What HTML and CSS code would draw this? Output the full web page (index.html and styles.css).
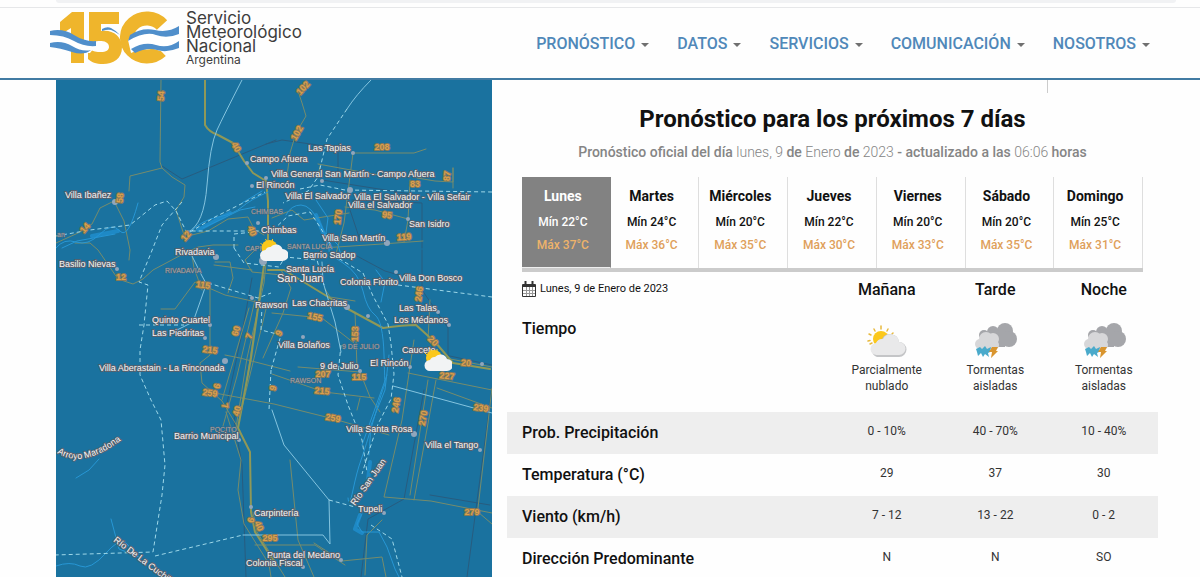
FILE: index.html
```html
<!DOCTYPE html>
<html lang="es">
<head>
<meta charset="utf-8">
<meta name="viewport" content="width=device-width, initial-scale=1">
<title>Servicio Meteorológico Nacional</title>
<link rel="stylesheet" href="styles.css">
</head>
<body>
<svg width="0" height="0" class="defs" aria-hidden="true">
  <symbol id="partly" viewBox="0 0 44 38">
    <g stroke="#e8b93c" stroke-width="1.500" stroke-linecap="round">
      <path d="M3 20l2-.5M4 13l2 1M9 8l1 2M16 5v3M23 8l-1 2M28 12l-1 1M5 23l2-1"/>
    </g>
    <circle cx="16" cy="18" r="8" fill="#fbc81c"/>
    <path d="M12 36a7 7 0 0 1-1-13 7 7 0 0 1 6-5 9 9 0 0 1 17 3 7.500 7.500 0 0 1 0 15z" fill="#c4c5c7"/>
    <path d="M12 34a6 6 0 0 1-1-12 7 7 0 0 1 7-4 8.500 8.500 0 0 1 16 3 6.500 6.500 0 0 1 0 13z" fill="#e9e9ea"/>
  </symbol>
  <symbol id="storm" viewBox="0 0 44 38">
    <g fill="#a5a6aa"><circle cx="32" cy="10" r="8"/><circle cx="36" cy="18" r="8"/><circle cx="20" cy="11" r="6"/><circle cx="11" cy="14" r="5"/><path d="M10 11h22v15H14z"/></g>
    <g fill="#d7d7d9"><circle cx="13" cy="18" r="7"/><circle cx="20" cy="18" r="6"/><circle cx="7" cy="23" r="5"/><circle cx="22" cy="24" r="4"/><path d="M7 18h15v10H7z"/></g>
    <path d="M3 28l4-2 2 2 3-3 2 3 4-2-1 5-2 1 1 4-4-3-2 3-2-4-3 3-1-4z" fill="#4aaacb"/>
    <path d="M19 26h6l-2 4h2l-7 7 1-6h-3z" fill="#d9952f"/>
  </symbol>
  <symbol id="mappartly" viewBox="0 0 28 23">
    <circle cx="10" cy="9" r="8" fill="#fbc81c"/>
    <path d="M1 4l2 2M6 0l1 2M13 0v2" stroke="#fbc81c"/>
    <path d="M6 22a5 5 0 0 1 0-11 5 5 0 0 1 5-3 7 7 0 0 1 12 2 6 6 0 0 1 0 12z" fill="#f2f3f4"/>
  </symbol>
</svg>

<div class="browser-edge"><span></span></div>
<header class="header">
  <a class="brand" href="#" aria-label="Servicio Meteorológico Nacional Argentina">
    <svg class="brand-mark" viewBox="0 0 130 54" aria-hidden="true">
      <g fill="#efb52c">
        <path d="M22 1h12v51H21V17L10 24V11z"/>
        <path d="M39 1h30v12H51v7c11-2 21 5 21 16 0 12-9 17-19 17-7 0-12-2-15-5V37c5 4 9 4 13 4 5 0 8-2 8-5 0-5-5-6-9-6-5 0-7 1-9 3h-2z"/>
      </g>
      <path d="M112 14A20 19 0 1 0 111 40" fill="none" stroke="#efb52c" stroke-width="14"/>
      <path d="M0 21q13-3 24 4t24 7l-8 10q-12 0-21-5T0 35z" fill="#fff"/>
      <path d="M0 20q13-3 24 4t22 6v5q-12 1-22-5T0 24zM0 32q12-3 22 3t19 4q-7 6-19 2T0 36z" fill="#508fcb"/>
      <path d="M52 18q5-3 9-1t9 7q-6-4-9-5t-9 1z" fill="#508fcb"/>
      <path d="M78 29q16-10 29-6t22-5v20q-12 5-22 1t-26 3z" fill="#fff"/>
      <path d="M80 24q12-8 25-5t24-4v8q-12 5-23 1t-28 6zM81 38q13-8 25-4t23-4v7q-12 5-22 2t-22 3z" fill="#508fcb"/>
    </svg>
    <span class="brand-name">Servicio<br>Meteorológico<br>Nacional<small>Argentina</small></span>
  </a>
  <nav class="nav" aria-label="Principal">
    <button type="button">PRONÓSTICO</button>
    <button type="button">DATOS</button>
    <button type="button">SERVICIOS</button>
    <button type="button">COMUNICACIÓN</button>
    <button type="button">NOSOTROS</button>
  </nav>
</header>

<main class="main">
  <section class="map" aria-label="Mapa de San Juan">
    <svg viewBox="56 80 436 497" preserveAspectRatio="xMidYMin slice">
      <g class="rail">
        <path d="M276 140L182 179l-20-13M266 144l16-4 50 7M338 147v30M322 180l95 15M352 200l70 3v45M350 210l10 30M355 255l30 16 14 4M422 250v40l26 38v27M238 405l-4 15 8 45 4 112M252 278l-10 55-16 75M424 390l-20 109-36 20-7 58M492 388l-25 189M445 355l47 10M430 495l60 10"/>
      </g>
      <g class="road">
        <path d="M161 80l-1 82 2 6-32 8-1 15M162 168l10 9 13 8-1 12-8 13 8 25"/>
        <path d="M114 201l-14 7-8 16-14 9-22 10M114 201l10 20 6 29-1 10M75 243l15 0 8 7 20 29 15 5 10-5 10-9 30-16 15-7 15-2 25 0"/>
        <path d="M188 236l20-5 20-12 20-2 6 12 10 6M268 243l-4 40-17 75-11 70M271 80"/>
        <path d="M298 91l4 12 4 13-10 17-6 20-3 23M353 153h61l12-4M353 153l-9 70-8 31M320 166l-2 11M318 164l60 11M417 178l18 3 18 1v-14M453 168v20M410 180l-2 40-4 22M345 207l30 3 33 9M322 248l60-4 41-3M272 218l20-8 12 10 45-7M255 250l-10 10 7 12 30 3"/>
        <path d="M161 309h14l20-27 30 13 45 10M202 290l-8-22-2-13M215 262h15l3 16-5 15M210 285v70l-10 8 2 20 20 18 18 30M214 265l38 5M255 300l-18 76-14 50M267 305l-28 115M249 308l-27 92M225 355l15 3 50 13M204 391l70 13 60 15 55 16M264 275l-4 20-14 90"/>
        <path d="M325 289l5 8 25 4M272 313l50 5 32 25M355 312l2 55M298 367l62 5 10 25 10 15M272 374l52 18 50 6M360 398l-3 12M281 270l10 18-8 25-20 45M414 340l-12 80-18 77 47 4 61 12M428 380l-18 115M436 380l-22 120M430 300l-2 40M408 373l84 17M445 358l47 9M437 388l55 20M492 388l-14 120M478 512l14 12"/>
        <path d="M226 412l15 48-3 30 6 34 25 40 2 13M253 512l4 20 20 32 8 13M290 460l8 80 16 37M314 543l28 18 40-4 4 20M382 520l-15 15-2 40M255 545l60 0 30 20"/>
      </g>
      <g class="main-road">
        <path d="M205 80v45q4 7 13 10l15 8 11 18 9 12 13 8 2 20v42M268 270l16 0 36 22 28 17 35 19q20-3 33-3l20 18 17 20 37 6M265 258l-14 100-13 70 12 24 1 60 4 20 18 28"/>
      </g>
      <g class="river">
        <path d="M56 248q8-10 20-6t24-8 20-3 18-28M62 248l15-7 38-7M190 232q12-12 28-15t24-10 26-15M203 228l19-9 18-9 15-3M242 203l20-12M286 215q5-10 15-10t20 20 8 24 14 14 20 28 12 24 9 40 1 30-10 30-14 45-8 30-5 8M316 200l12 18-2 15 12 12 3 10M376 270l9 12-4 20M389 355l-4 35-14 35-2 30M362 514l-5 10 5 8 17 0 8 15 8 22 4 8M387 375l-25 70M56 566q14-5 24 0t27-14 24-2M76 478l13-8 10-11M111 519l8 30 20 8"/>
      </g>
      <g class="wide-river"><path d="M316 215l6 15 9 18M360 515l-5 14 7 4M368 480l2-18M198 230l32-17M92 236l26-5"/></g>
      <g class="limit">
        <path d="M242 80q-18 35-25 50t-10 55-19 47M371 80q-15 15-24 29M206 285l-13 37-20 10M322 262l1 20 12 40 6 30M192 256l10 20 5 9M272 410l12 35 45 55M393 386l99 27M243 535h80l7 9-1-44"/>
      </g>
      <g class="dashed">
        <path d="M56 236l34-6 40-5 25-20 12-4 9 10 10 20h74M182 202l-20 23-11 28-12 29 9 3-4 40-4 25 0 25 11 25 10 20 4 45-3 30-9 57-99 3M155 556l88-21M347 109l-20 30-9 38-10 14-25 12M300 189l20-4 25 5 147 2M234 248v-14l20-2M234 248l10 15 35 4 6-10 32 3 7 25M273 230l15-14 22-4 10 15 12 20M139 325h45M208 283l50 15 13-5M262 305l-1 25 20 5-10 35M333 255l30 18 10 23 15 28 3 20 3 30-3 25-13 25-10 30-6 20M398 285l94 12M341 345l-3 30 10 30 14 35 5 32M329 500l26 7M371 525l21 14 10 38M190 232l25-15 50-25M271 370l-2 40"/>
      </g>
      <g class="place-dots">
        <circle cx="115" cy="202" r="3"/><circle cx="266" cy="178" r="2"/><circle cx="252" cy="186" r="2"/><circle cx="247" cy="163" r="2"/><circle cx="258" cy="223" r="2"/><circle cx="353" cy="153" r="2"/><circle cx="322" cy="181" r="2"/><circle cx="350" cy="190" r="3"/><circle cx="408" cy="219" r="2"/><circle cx="387" cy="243" r="3"/><circle cx="216" cy="257" r="3"/><circle cx="117" cy="269" r="2"/><circle cx="263" cy="261" r="4"/><circle cx="396" cy="272" r="2"/><circle cx="347" cy="307" r="3"/><circle cx="368" cy="316" r="2"/><circle cx="252" cy="298" r="2"/><circle cx="438" cy="312" r="2"/><circle cx="449" cy="325" r="2"/><circle cx="210" cy="325" r="2"/><circle cx="205" cy="338" r="2"/><circle cx="303" cy="337" r="2"/><circle cx="225" cy="361" r="3"/><circle cx="360" cy="371" r="2"/><circle cx="410" cy="367" r="2"/><circle cx="482" cy="364" r="2"/><circle cx="239" cy="440" r="2"/><circle cx="414" cy="434" r="3"/><circle cx="480" cy="450" r="2"/><circle cx="251" cy="507" r="2"/><circle cx="384" cy="513" r="2"/><circle cx="341" cy="560" r="2"/><circle cx="303" cy="567" r="2"/>
      </g>
      <g class="dept">
        <text x="251" y="214">CHIMBAS</text><text x="245" y="251">CAPITAL</text><text x="287" y="249">SANTA LUCÍA</text><text x="165" y="273">RIVADAVIA</text><text x="342" y="349">9 DE JULIO</text><text x="290" y="383">RAWSON</text><text x="210" y="432">POCITO</text><text x="57" y="237">an</text>
      </g>
      <g class="route">
        <text transform="translate(303 88) rotate(-48)">102</text><text transform="translate(297 133) rotate(-60)">102</text><text transform="translate(382 147)">208</text><text transform="translate(447 176) rotate(-85)">87</text><text transform="translate(415 184)">83</text><text transform="translate(387 215) rotate(8)">95</text><text transform="translate(404 237) rotate(-4)">119</text><text transform="translate(338 217) rotate(-82)">170</text><text transform="translate(161 96) rotate(-85)">54</text><text transform="translate(236 147) rotate(60)">40</text><text transform="translate(85 228) rotate(-50)">14</text><text transform="translate(121 277)">12</text><text transform="translate(120 198) rotate(-85)">58</text><text transform="translate(186 236) rotate(-50)">12</text><text transform="translate(252 231) rotate(70)">40</text><text transform="translate(203 285) rotate(8)">115</text><text transform="translate(315 317) rotate(12)">155</text><text transform="translate(236 331) rotate(-75)">60</text><text transform="translate(249 336) rotate(-70)">7</text><text transform="translate(210 350) rotate(8)">215</text><text transform="translate(217 386) rotate(-75)">6</text><text transform="translate(210 393) rotate(8)">259</text><text transform="translate(225 406) rotate(80)">7</text><text transform="translate(237 411) rotate(-75)">40</text><text transform="translate(279 333) rotate(-60)">9</text><text transform="translate(273 388) rotate(-75)">9</text><text transform="translate(355 334) rotate(-88)">153</text><text transform="translate(419 294) rotate(-82)">246</text><text transform="translate(396 405) rotate(-80)">246</text><text transform="translate(466 363) rotate(5)">20</text><text transform="translate(433 341) rotate(45)">20</text><text transform="translate(447 376) rotate(5)">227</text><text transform="translate(323 374)">207</text><text transform="translate(322 391) rotate(5)">215</text><text transform="translate(359 377)">115</text><text transform="translate(481 408) rotate(8)">239</text><text transform="translate(472 512)">279</text><text transform="translate(423 418) rotate(-80)">270</text><text transform="translate(333 418) rotate(10)">259</text><text transform="translate(270 538)">295</text><text transform="translate(259 526) rotate(65)">40</text><text transform="translate(251 520) rotate(-75)">6</text>
      </g>
      <g class="place">
        <text x="308" y="151">Las Tapias</text><text x="250" y="162">Campo Afuera</text><text x="271" y="177">Villa General San Martín - Campo Afuera</text><text x="256" y="188">El Rincón</text><text x="285" y="199">Villa El Salvador</text><text x="354" y="200">Villa El Salvador - Villa Sefair</text><text x="348" y="208">Villa el Salvador</text><text x="409" y="227">San Isidro</text><text x="322" y="241">Villa San Martín</text><text x="65" y="198">Villa Ibañez</text><text x="261" y="233">Chimbas</text><text x="303" y="258">Barrio Sadop</text><text x="175" y="255">Rivadavia</text><text x="59" y="267">Basilio Nievas</text><text x="286" y="272">Santa Lucía</text><text class="city" x="277" y="282">San Juan</text><text x="340" y="285">Colonia Fiorito</text><text x="399" y="281">Villa Don Bosco</text><text x="292" y="306">Las Chacritas</text><text x="255" y="308">Rawson</text><text x="399" y="311">Las Talas</text><text x="394" y="323">Los Médanos</text><text x="152" y="323">Quinto Cuartel</text><text x="152" y="336">Las Piedritas</text><text x="278" y="348">Villa Bolaños</text><text x="402" y="353">Caucete</text><text x="320" y="369">9 de Julio</text><text x="370" y="366">El Rincón</text><text x="99" y="371">Villa Aberastain - La Rinconada</text><text x="174" y="439">Barrio Municipal</text><text x="346" y="432">Villa Santa Rosa</text><text x="425" y="448">Villa el Tango</text><text x="254" y="516">Carpintería</text><text x="358" y="512">Tupeli</text><text x="267" y="558">Punta del Medano</text><text x="246" y="566">Colonia Fiscal</text>
        <path id="maradona" d="M57 453Q82 469 120 441" fill="none" stroke="none"/>
        <text><textPath href="#maradona">Arroyo Maradona</textPath></text>
        <text transform="translate(113 541) rotate(37)">Río De La Cuchilla</text>
        <text transform="translate(355 506) rotate(-55)">Río San Juan</text>
      </g>
      <use href="#mappartly" x="259" y="239" width="29" height="23"/>
      <use href="#mappartly" x="424" y="349" width="28" height="23"/>
    </svg>
  </section>

  <section class="forecast">
    <div class="fragment"></div>
    <h1>Pronóstico para los próximos 7 días</h1>
    <p class="issued"><b>Pronóstico oficial del día</b> lunes, 9 <b>de</b> Enero <b>de</b> 2023 <b>- actualizado a las</b> 06:06 <b>horas</b></p>
    <div class="days">
      <button type="button" class="day active"><strong>Lunes</strong><span>Mín 22°C</span><span class="max">Máx 37°C</span></button>
      <button type="button" class="day"><strong>Martes</strong><span>Mín 24°C</span><span class="max">Máx 36°C</span></button>
      <button type="button" class="day"><strong>Miércoles</strong><span>Mín 20°C</span><span class="max">Máx 35°C</span></button>
      <button type="button" class="day"><strong>Jueves</strong><span>Mín 22°C</span><span class="max">Máx 30°C</span></button>
      <button type="button" class="day"><strong>Viernes</strong><span>Mín 20°C</span><span class="max">Máx 33°C</span></button>
      <button type="button" class="day"><strong>Sábado</strong><span>Mín 20°C</span><span class="max">Máx 35°C</span></button>
      <button type="button" class="day"><strong>Domingo</strong><span>Mín 25°C</span><span class="max">Máx 31°C</span></button>
    </div>
    <table class="detail">
      <thead>
        <tr>
          <th class="date" scope="col"><span>
            <svg viewBox="0 0 14 16" width="14" height="16" fill="none" stroke="#333" aria-hidden="true"><path d="M.5 3.500h13v12H.5z"/><path d="M1 9.500h12M1 12.500h12M4.500 6v9M7.500 6v9M10.500 6v9" stroke="#999"/><path d="M1 4.500h12" stroke-width="3"/><path d="M3.500 0v4M10.500 0v4" stroke-width="2"/></svg>
            Lunes, 9 de Enero de 2023</span></th>
          <th scope="col">Mañana</th><th scope="col">Tarde</th><th scope="col">Noche</th>
        </tr>
      </thead>
      <tbody>
        <tr class="weather">
          <th scope="row">Tiempo</th>
          <td><svg class="icon"><use href="#partly"/></svg>Parcialmente<br>nublado</td>
          <td><svg class="icon"><use href="#storm"/></svg>Tormentas<br>aisladas</td>
          <td><svg class="icon"><use href="#storm"/></svg>Tormentas<br>aisladas</td>
        </tr>
        <tr class="shade"><th scope="row">Prob. Precipitación</th><td>0 - 10%</td><td>40 - 70%</td><td>10 - 40%</td></tr>
        <tr><th scope="row">Temperatura (°C)</th><td>29</td><td>37</td><td>30</td></tr>
        <tr class="shade"><th scope="row">Viento (km/h)</th><td>7 - 12</td><td>13 - 22</td><td>0 - 2</td></tr>
        <tr class="last"><th scope="row">Dirección Predominante</th><td>N</td><td>N</td><td>SO</td></tr>
      </tbody>
    </table>
  </section>
</main>
</body>
</html>
```
FILE: styles.css
```css
* { box-sizing: border-box; }
body { margin: 0; background: #fefefe; color: #111; font-family: Roboto, "Liberation Sans", sans-serif; }
button { font: inherit; border: 0; background: none; padding: 0; color: inherit; cursor: pointer; }
.defs { display: block; height: 0; }

.browser-edge { height: 8px; padding: 0 24px 0 56px; border-bottom: 1px solid #e6e7e9; }
.browser-edge span { display: block; height: 3px; background: #f1f2f4; border-radius: 0 0 8px 8px; }

.header { display: flex; justify-content: space-between; height: 72px; padding: 0 50px; border-bottom: 2px solid #417ba3; }
.brand { display: flex; gap: 6px; padding-top: 3px; color: #3d3d3d; text-decoration: none; }
.brand-mark { width: 130px; height: 54px; }
.brand-name { font: 17px/14px Inter, sans-serif; }
.brand-name small { display: block; font-size: 12px; line-height: 14px; }
.nav { display: flex; align-items: center; gap: 28px; height: 70px; color: #5088b9; font-size: 16px; font-weight: 500; }
.nav button { display: flex; align-items: center; gap: 6px; }
.nav button::after { content: ""; margin-top: 4px; border: 4px solid transparent; border-top-color: #707070; border-bottom: 0; }

.main { display: grid; grid-template-columns: 436fr 651fr; gap: 15px; padding: 0 42px 0 56px; }
.map { background: #1a729f; overflow: hidden; }
.map svg { display: block; width: 100%; }
.map g { fill: none; stroke-linejoin: round; stroke-linecap: round; }
.map .rail { stroke: #285c7f; stroke-width: 1; }
.map .road { stroke: #768c6c; stroke-width: 1; }
.map .main-road { stroke: #8f9857; stroke-width: 2; }
.map .river { stroke: #2797d5; stroke-width: 1; }
.map .wide-river { stroke: #2193d6; stroke-width: 4; opacity: .7; }
.map .limit { stroke: #84c4df; stroke-width: 1; }
.map .dashed { stroke: #9ed8e9; stroke-width: 1; stroke-dasharray: 4 3; stroke-linecap: butt; }
.map .place-dots { fill: #91a6bc; }
.map text { font-family: "Liberation Sans", sans-serif; font-size: 9px; paint-order: stroke; stroke-width: 2px; }
.map .dept text { font-size: 7px; fill: #a9a8a6; stroke: #49667c; stroke-width: 1px; }
.map .route text { font-size: 9px; font-weight: bold; fill: #dba04c; stroke: #8a7955; text-anchor: middle; dominant-baseline: central; }
.map .place text { fill: #f7f6f6; stroke: #56616e; }
.map .place .city { font-size: 11px; }

.forecast { text-align: center; }
.fragment { width: 1px; height: 13px; margin-left: 83%; background: #ccc; }
h1 { margin: 10px 0 0; font-size: 24px; line-height: 32px; font-weight: 700; }
.issued { margin: 7px 0 15px; font-size: 14px; line-height: 20px; color: #858585; font-weight: 300; }
.issued b { font-weight: 500; }
.days { display: grid; grid-template-columns: repeat(7, 1fr); margin: 0 15px; border-bottom: 4px solid #cbcbcb; }
.day { display: flex; flex-direction: column; align-items: center; padding: 8px 6px 10px 0; border-right: 1px solid #dedede; font-size: 12px; line-height: 23px; font-weight: 500; }
.day strong { margin-bottom: 4px; font-size: 14px; line-height: 22px; font-weight: 700; }
.day .max { color: #dfa05a; }
.day.active { background: #828282; color: #fff; border-color: #828282; border-bottom: 1px solid #eee; }
.day.active .max { color: #eeb36a; }

.detail { width: 100%; table-layout: fixed; border-collapse: collapse; }
.detail th, .detail td { padding: 0; text-align: center; font-weight: 500; font-size: 16px; }
.detail th:first-child { width: 50%; padding-left: 15px; text-align: left; }
.detail thead th { height: 37px; padding-bottom: 1px; line-height: 22px; }
.detail th.date { font-size: 11px; font-weight: 400; padding-bottom: 3px; }
.detail .date span { display: flex; align-items: center; gap: 4px; }
.detail td { font-size: 12px; line-height: 16px; font-weight: 400; color: #333; }
.detail tbody tr { height: 42px; }
.detail .weather { height: 103px; }
.detail .weather > * { vertical-align: top; }
.detail .weather th { padding-top: 10px; }
.detail .weather td { padding-top: 12px; }
.icon { display: block; width: 44px; height: 38px; margin: 0 auto 3px; }
.detail .shade { background: #eee; }
.detail tbody tr:not(.weather) td { padding-bottom: 5px; }
.detail tbody tr:not(.weather) th { padding-bottom: 2px; }
```
